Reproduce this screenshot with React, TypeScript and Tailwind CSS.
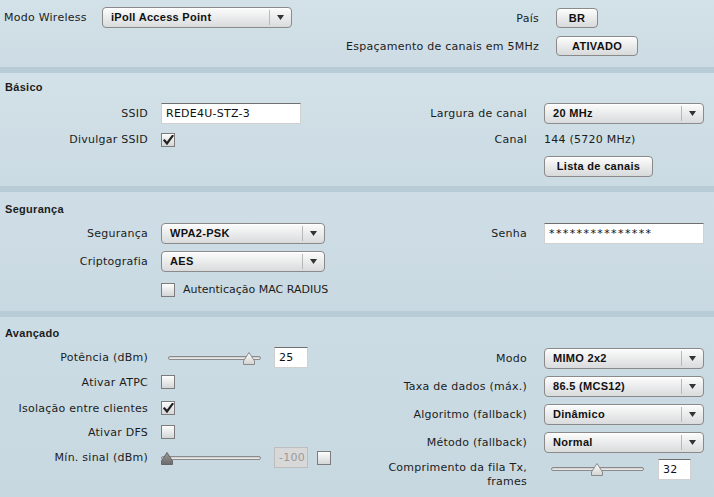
import React from "react";

const B = "font-['Liberation_Sans',Arial,sans-serif] font-bold tracking-[0.3px]";

function Select({ cls, value }: { cls: string; value: string }) {
  return (
    <div
      className={`flex h-[21px] items-center rounded-[4px] border border-[#8a8a8a] bg-gradient-to-b from-[#fcfcfc] to-[#d9dbdc] shadow-[inset_0_1px_0_#fff] ${cls}`}
    >
      <span className={`flex-1 pl-[8px] text-[11px] leading-[13px] text-[#111] ${B}`}>{value}</span>
      <div className="h-[15px] w-px bg-[#b8b8b8]" />
      <div className="flex w-[21px] items-center justify-center">
        <svg width="7" height="5" viewBox="0 0 7 5">
          <polygon points="0,0 7,0 3.5,5" fill="#333" />
        </svg>
      </div>
    </div>
  );
}

function Button({ cls, children }: { cls: string; children: React.ReactNode }) {
  return (
    <div
      className={`flex items-center justify-center rounded-[4px] border border-[#8a8a8a] bg-gradient-to-b from-[#fdfdfd] to-[#d7d9da] text-[11px] leading-[13px] text-[#111] shadow-[inset_0_1px_0_#fff] ${B} ${cls}`}
    >
      {children}
    </div>
  );
}

function Input({ cls, value, disabled }: { cls: string; value: string; disabled?: boolean }) {
  return (
    <div
      className={`flex items-center border ${
        disabled
          ? "border-[#bdbdbd] bg-[#d8d8d8] text-[#9a9a9a]"
          : "border-[#d0d0d0] border-t-[#6f6f6f] bg-white text-[#111]"
      } pl-[4px] text-[11px] leading-[13px] ${cls}`}
    >
      {value}
    </div>
  );
}

function Check({ checked }: { checked?: boolean }) {
  return (
    <div className="relative h-[14px] w-[14px] shrink-0 border border-[#7c7c7c] bg-gradient-to-b from-[#fdfdfd] to-[#d4d6d7]">
      {checked && (
        <svg className="absolute left-[1px] top-[1px]" width="11" height="11" viewBox="0 0 11 11">
          <path d="M1.5 5.5 L4 8.5 L9.5 1" stroke="#222" strokeWidth="2.2" fill="none" strokeLinecap="square" />
        </svg>
      )}
    </div>
  );
}

function Slider({ cls, thumbCls, disabled }: { cls: string; thumbCls: string; disabled?: boolean }) {
  return (
    <div className={`relative h-[14px] ${cls}`}>
      <div className="absolute left-0 right-0 top-[4px] h-[4px] rounded-full border border-[#8a8a8a] bg-gradient-to-b from-[#c9c9c9] to-[#f2f2f2]" />
      <svg className={`absolute top-[0px] ${thumbCls}`} width="12" height="13" viewBox="0 0 12 13">
        <defs>
          <linearGradient id={disabled ? "tgd" : "tg"} x1="0" y1="0" x2="0" y2="1">
            <stop offset="0" stopColor={disabled ? "#9a9a9a" : "#ffffff"} />
            <stop offset="1" stopColor={disabled ? "#6a6a6a" : "#d2d2d2"} />
          </linearGradient>
        </defs>
        <polygon
          points="6,0.5 11.5,9 11.5,12.5 0.5,12.5 0.5,9"
          fill={`url(#${disabled ? "tgd" : "tg"})`}
          stroke={disabled ? "#666" : "#8a8a8a"}
          strokeWidth="1"
        />
      </svg>
    </div>
  );
}

function LRow({ label, children, cls = "" }: { label: string; children: React.ReactNode; cls?: string }) {
  return (
    <div className={`flex items-center ${cls}`}>
      <div className="flex w-[148px] shrink-0 justify-end whitespace-nowrap">{label}</div>
      <div className="ml-[13px] flex items-center">{children}</div>
    </div>
  );
}

function RRow({ label, children, cls = "" }: { label: string; children: React.ReactNode; cls?: string }) {
  return (
    <div className={`flex items-center ${cls}`}>
      <div className="flex w-[170px] shrink-0 justify-end whitespace-nowrap">{label}</div>
      <div className="ml-[17px] flex items-center">{children}</div>
    </div>
  );
}

const Band = () => <div className="h-[6px] bg-[#b8ccd8]" />;

export default function App() {
  return (
    <div className="h-[497px] w-[714px] overflow-hidden font-['DejaVu_Sans',Verdana,sans-serif] text-[11px] leading-[13px] tracking-[0.25px] text-[#1c1c1c]">
      {/* Section 1 */}
      <div className="flex h-[67px] bg-gradient-to-b from-[#d3e1e8] to-[#cddce4]">
        <div className="w-[357px] pt-[7px]">
          <div className="flex h-[21px] items-center pl-[4px]">
            <div className="w-[98px]">Modo Wireless</div>
            <Select cls="w-[190px]" value="iPoll Access Point" />
          </div>
        </div>
        <div className="flex-1 pt-[8px]">
          <div className="flex h-[20px] items-center">
            <div className="flex w-[182px] justify-end">País</div>
            <Button cls="ml-[17px] h-[20px] w-[42px]">BR</Button>
          </div>
          <div className="mt-[8px] flex h-[20px] items-center">
            <div className="flex w-[182px] shrink-0 justify-end whitespace-nowrap">Espaçamento de canais em 5MHz</div>
            <Button cls="ml-[17px] h-[20px] w-[82px]">ATIVADO</Button>
          </div>
        </div>
      </div>
      <Band />
      {/* Section 2 */}
      <div className="h-[113px] bg-gradient-to-b from-[#d3e1e8] to-[#cbdbe3] pt-[8px]">
        <div className={`pl-[5px] ${B}`}>Básico</div>
        <div className="mt-[9px] flex">
          <div className="flex w-[357px] flex-col gap-[5px]">
            <LRow label="SSID" cls="h-[21px]">
              <Input cls="h-[21px] w-[140px]" value="REDE4U-STZ-3" />
            </LRow>
            <LRow label="Divulgar SSID" cls="h-[21px]">
              <Check checked />
            </LRow>
          </div>
          <div className="flex flex-1 flex-col gap-[5px]">
            <RRow label="Largura de canal" cls="h-[21px]">
              <Select cls="w-[160px]" value="20 MHz" />
            </RRow>
            <RRow label="Canal" cls="h-[21px]">
              <span>144 (5720 MHz)</span>
            </RRow>
            <RRow label="" cls="h-[21px] mt-[1px]">
              <Button cls="h-[21px] w-[109px]">Lista de canais</Button>
            </RRow>
          </div>
        </div>
      </div>
      <Band />
      {/* Section 3 */}
      <div className="h-[119px] bg-gradient-to-b from-[#cfdee6] to-[#c9d9e2] pt-[11px]">
        <div className={`pl-[5px] ${B}`}>Segurança</div>
        <div className="mt-[7px] flex">
          <div className="flex w-[357px] flex-col gap-[7px]">
            <LRow label="Segurança" cls="h-[21px]">
              <Select cls="w-[164px]" value="WPA2-PSK" />
            </LRow>
            <LRow label="Criptografia" cls="h-[21px]">
              <Select cls="w-[164px]" value="AES" />
            </LRow>
            <LRow label="" cls="h-[21px]">
              <Check />
              <span className="ml-[8px] whitespace-nowrap tracking-[0px]">Autenticação MAC RADIUS</span>
            </LRow>
          </div>
          <div className="flex flex-1 flex-col">
            <RRow label="Senha" cls="h-[21px]">
              <Input cls="h-[21px] w-[160px] tracking-[1.4px]" value="***************" />
            </RRow>
          </div>
        </div>
      </div>
      <Band />
      {/* Section 4 */}
      <div className="h-[180px] bg-gradient-to-b from-[#ccdce4] to-[#c7d8e1] pt-[10px]">
        <div className={`pl-[5px] ${B}`}>Avançado</div>
        <div className="mt-[7px] flex">
          <div className="flex w-[357px] flex-col">
            <LRow label="Potência (dBm)" cls="h-[21px]">
              <Slider cls="ml-[7px] mt-[2px] w-[93px]" thumbCls="left-[75px]" />
              <Input cls="ml-[13px] h-[21px] w-[34px]" value="25" />
            </LRow>
            <LRow label="Ativar ATPC" cls="mt-[7px] h-[14px]">
              <Check />
            </LRow>
            <LRow label="Isolação entre clientes" cls="mt-[12px] h-[14px]">
              <Check checked />
            </LRow>
            <LRow label="Ativar DFS" cls="mt-[10px] h-[14px]">
              <Check />
            </LRow>
            <LRow label="Mín. sinal (dBm)" cls="mt-[8px] h-[21px]">
              <Slider cls="mt-[2px] w-[100px]" thumbCls="left-0" disabled />
              <Input cls="ml-[13px] h-[21px] w-[34px]" value="-100" disabled />
              <div className="ml-[9px]">
                <Check />
              </div>
            </LRow>
          </div>
          <div className="flex flex-1 flex-col gap-[7px]">
            <RRow label="Modo" cls="h-[21px] mt-[1px]">
              <Select cls="w-[160px]" value="MIMO 2x2" />
            </RRow>
            <RRow label="Taxa de dados (máx.)" cls="h-[21px]">
              <Select cls="w-[160px]" value="86.5 (MCS12)" />
            </RRow>
            <RRow label="Algoritmo (fallback)" cls="h-[21px]">
              <Select cls="w-[160px]" value="Dinâmico" />
            </RRow>
            <RRow label="Método (fallback)" cls="h-[21px]">
              <Select cls="w-[160px]" value="Normal" />
            </RRow>
            <div className="-mt-[1px] flex items-start">
              <div className="mt-[2px] w-[170px] shrink-0 text-right leading-[14px]">
                Comprimento da fila Tx,
                <br />
                frames
              </div>
              <Slider cls="ml-[24px] mt-[4px] w-[93px]" thumbCls="left-[40px]" />
              <Input cls="ml-[14px] h-[21px] w-[33px]" value="32" />
            </div>
          </div>
        </div>
      </div>
    </div>
  );
}
